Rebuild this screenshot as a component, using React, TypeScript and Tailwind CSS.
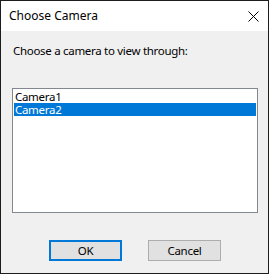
import React from 'react';

const App = () => {
    return (
        <div className="w-[269px] h-[274px] border border-[#1c1c1c] bg-[#f0f0f0] flex flex-col text-[11.5px] tracking-[-0.3px] text-black font-['Noto_Sans',sans-serif]">
            {/* title bar */}
            <div className="h-[30px] bg-white flex items-center justify-between pl-[8px] pr-[9px]">
                <span className="leading-none text-[12px] tracking-normal">Choose Camera</span>
                <svg width="11" height="11" viewBox="0 0 11 11" className="mt-[1px]">
                    <path d="M0.5 0.5 L10.5 10.5 M10.5 0.5 L0.5 10.5" stroke="#000" strokeWidth="1" />
                </svg>
            </div>

            <div className="flex flex-col px-[11px]">
                <p className="mt-[12px] leading-[16px] pl-px">Choose a camera to view through:</p>

                <div className="mt-[29px] w-[246px] h-[125px] border border-[#828790] bg-white p-px">
                    <div className="h-[13px] leading-[13px] pl-[1px] overflow-hidden">Camera1</div>
                    <div className="h-[13px] leading-[13px] pl-[1px] overflow-hidden bg-[#0078d7] text-white">Camera2</div>
                </div>
            </div>

            <div className="mt-[27px] flex pl-[48px] gap-[26px]">
                <button className="w-[73px] h-[21px] border-2 border-[#0078d7] bg-[#e1e1e1] leading-none">OK</button>
                <button className="w-[73px] h-[21px] border border-[#adadad] bg-[#e1e1e1] leading-none">Cancel</button>
            </div>
        </div>
    );
};

export default App;
